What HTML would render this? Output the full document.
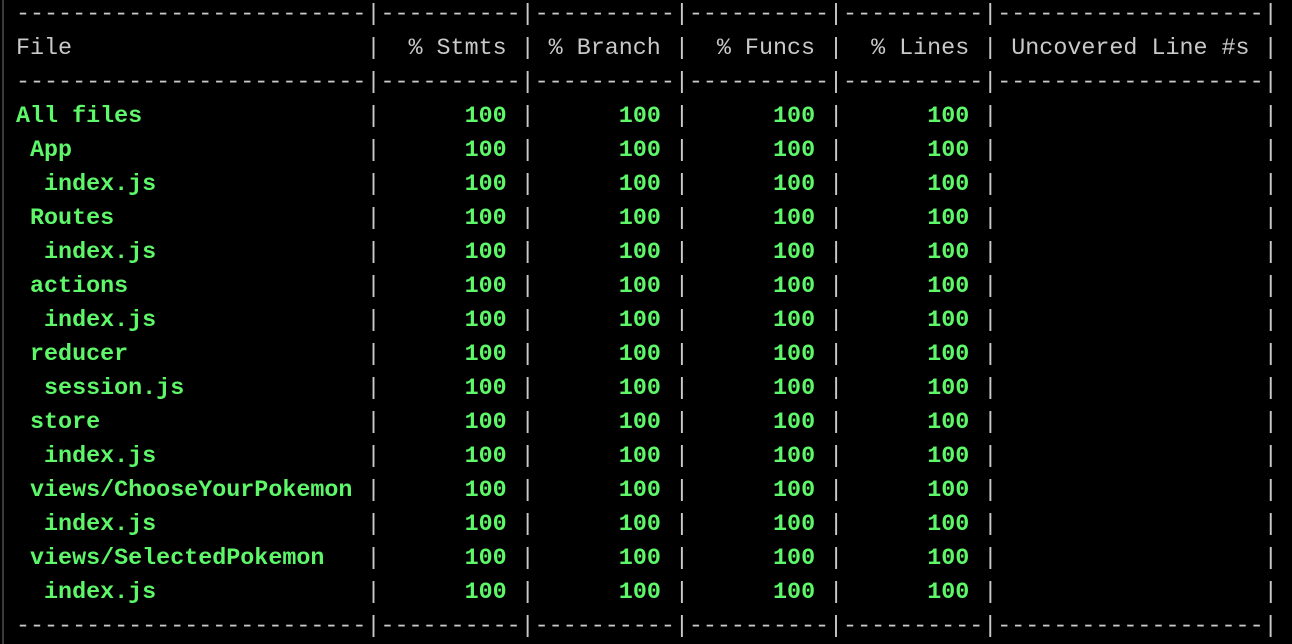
<!DOCTYPE html>
<html><head><meta charset="utf-8"><style>
html,body{margin:0;padding:0;background:#000;width:1292px;height:644px;overflow:hidden}
.b{position:absolute;left:2px;top:0;width:2px;height:644px;background:#3a3a3a}
pre{position:absolute;left:16px;top:-2px;margin:0;font-family:"Liberation Mono",monospace;font-size:23.37px;line-height:34px;color:#c9c9c9;white-space:pre}
.g{color:#5ef76a;font-weight:bold}
</style></head><body><div class="b"></div>
<pre>-------------------------|----------|----------|----------|----------|-------------------|
File                     |  % Stmts | % Branch |  % Funcs |  % Lines | Uncovered Line #s |
-------------------------|----------|----------|----------|----------|-------------------|
<span class="g">All files               </span> | <span class="g">     100</span> | <span class="g">     100</span> | <span class="g">     100</span> | <span class="g">     100</span> |                   |
<span class="g"> App                    </span> | <span class="g">     100</span> | <span class="g">     100</span> | <span class="g">     100</span> | <span class="g">     100</span> |                   |
<span class="g">  index.js              </span> | <span class="g">     100</span> | <span class="g">     100</span> | <span class="g">     100</span> | <span class="g">     100</span> |                   |
<span class="g"> Routes                 </span> | <span class="g">     100</span> | <span class="g">     100</span> | <span class="g">     100</span> | <span class="g">     100</span> |                   |
<span class="g">  index.js              </span> | <span class="g">     100</span> | <span class="g">     100</span> | <span class="g">     100</span> | <span class="g">     100</span> |                   |
<span class="g"> actions                </span> | <span class="g">     100</span> | <span class="g">     100</span> | <span class="g">     100</span> | <span class="g">     100</span> |                   |
<span class="g">  index.js              </span> | <span class="g">     100</span> | <span class="g">     100</span> | <span class="g">     100</span> | <span class="g">     100</span> |                   |
<span class="g"> reducer                </span> | <span class="g">     100</span> | <span class="g">     100</span> | <span class="g">     100</span> | <span class="g">     100</span> |                   |
<span class="g">  session.js            </span> | <span class="g">     100</span> | <span class="g">     100</span> | <span class="g">     100</span> | <span class="g">     100</span> |                   |
<span class="g"> store                  </span> | <span class="g">     100</span> | <span class="g">     100</span> | <span class="g">     100</span> | <span class="g">     100</span> |                   |
<span class="g">  index.js              </span> | <span class="g">     100</span> | <span class="g">     100</span> | <span class="g">     100</span> | <span class="g">     100</span> |                   |
<span class="g"> views/ChooseYourPokemon</span> | <span class="g">     100</span> | <span class="g">     100</span> | <span class="g">     100</span> | <span class="g">     100</span> |                   |
<span class="g">  index.js              </span> | <span class="g">     100</span> | <span class="g">     100</span> | <span class="g">     100</span> | <span class="g">     100</span> |                   |
<span class="g"> views/SelectedPokemon  </span> | <span class="g">     100</span> | <span class="g">     100</span> | <span class="g">     100</span> | <span class="g">     100</span> |                   |
<span class="g">  index.js              </span> | <span class="g">     100</span> | <span class="g">     100</span> | <span class="g">     100</span> | <span class="g">     100</span> |                   |
-------------------------|----------|----------|----------|----------|-------------------|</pre>
</body></html>
